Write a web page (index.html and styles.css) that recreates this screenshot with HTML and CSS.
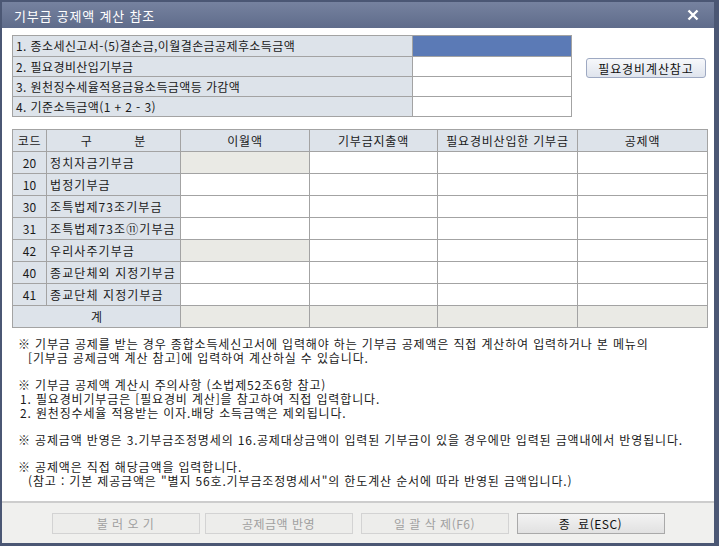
FILE: index.html
```html
<!DOCTYPE html>
<html lang="ko">
<head>
<meta charset="UTF-8">
<title>기부금 공제액 계산 참조</title>
<link rel="stylesheet" href="styles.css">
</head>
<body>
<div class="window">
    <div class="titlebar">
        <span class="title">기부금 공제액 계산 참조</span>
        <svg class="close" width="12" height="12" viewBox="0 0 12 12">
            <path d="M1.5 1.5 L10.5 10.5 M10.5 1.5 L1.5 10.5" stroke="#fff" stroke-width="2.4" fill="none"/>
        </svg>
    </div>

    <div class="content">
        <div class="top">
            <table class="base">
                <tr><td class="lbl">1. 종소세신고서-(5)결손금,이월결손금공제후소득금액</td><td class="val active"></td></tr>
                <tr><td class="lbl">2. 필요경비산입기부금</td><td class="val"></td></tr>
                <tr><td class="lbl">3. 원천징수세율적용금융소득금액등 가감액</td><td class="val"></td></tr>
                <tr><td class="lbl">4. 기준소득금액(1 + 2 - 3)</td><td class="val"></td></tr>
            </table>
            <button class="ref-btn">필요경비계산참고</button>
        </div>

        <table class="grid">
            <colgroup>
                <col class="c-code"><col class="c-name"><col class="c-amt"><col class="c-amt2"><col class="c-exp"><col class="c-ded">
            </colgroup>
            <tr class="head">
                <td>코드</td><td>구&nbsp;&nbsp;&nbsp;&nbsp;&nbsp;&nbsp;&nbsp;&nbsp;&nbsp;&nbsp;분</td><td>이월액</td><td>기부금지출액</td><td>필요경비산입한 기부금</td><td>공제액</td>
            </tr>
            <tr><td class="code">20</td><td class="name">정치자금기부금</td><td class="off"></td><td></td><td></td><td></td></tr>
            <tr><td class="code">10</td><td class="name">법정기부금</td><td></td><td></td><td></td><td></td></tr>
            <tr><td class="code">30</td><td class="name">조특법제73조기부금</td><td></td><td></td><td></td><td></td></tr>
            <tr><td class="code">31</td><td class="name">조특법제73조⑪기부금</td><td></td><td></td><td></td><td></td></tr>
            <tr><td class="code">42</td><td class="name">우리사주기부금</td><td class="off"></td><td></td><td></td><td></td></tr>
            <tr><td class="code">40</td><td class="name">종교단체외 지정기부금</td><td></td><td></td><td></td><td></td></tr>
            <tr><td class="code">41</td><td class="name">종교단체 지정기부금</td><td></td><td></td><td></td><td></td></tr>
            <tr class="sum"><td colspan="2" class="code">계</td><td class="off"></td><td class="off"></td><td class="off"></td><td class="off"></td></tr>
        </table>

        <div class="notes">
            <p>※ 기부금 공제를 받는 경우 종합소득세신고서에 입력해야 하는 기부금 공제액은 직접 계산하여 입력하거나 본 메뉴의</p>
            <p class="ind2">[기부금 공제금액 계산 참고]에 입력하여 계산하실 수 있습니다.</p>
            <p class="gap">※ 기부금 공제액 계산시 주의사항 (소법제52조6항 참고)</p>
            <p class="ind1">1. 필요경비기부금은 [필요경비 계산]을 참고하여 직접 입력합니다.</p>
            <p class="ind1">2. 원천징수세율 적용받는 이자.배당 소득금액은 제외됩니다.</p>
            <p class="gap">※ 공제금액 반영은 3.기부금조정명세의 16.공제대상금액이 입력된 기부금이 있을 경우에만 입력된 금액내에서 반영됩니다.</p>
            <p class="gap">※ 공제액은 직접 해당금액을 입력합니다.</p>
            <p class="ind2">(참고 : 기본 제공금액은 "별지 56호.기부금조정명세서"의 한도계산 순서에 따라 반영된 금액입니다.)</p>
        </div>
    </div>

    <div class="footer">
        <button class="fbtn" disabled>불 러 오 기</button>
        <button class="fbtn" disabled>공제금액 반영</button>
        <button class="fbtn wide" disabled>일 괄 삭 제(F6)</button>
        <button class="fbtn wide on">종&nbsp;&nbsp;료(ESC)</button>
    </div>
</div>
</body>
</html>
```

FILE: styles.css
```css
* {
    box-sizing: border-box;
}
body {
    margin: 0;
    font-family: "Noto Sans CJK KR", "Noto Sans", sans-serif;
    font-size: 12px;
    color: #1a1a1a;
}
.window {
    width: 719px;
    height: 546px;
    background-color: #4b5774;
    padding: 2px 5px 3px 2px;
    display: flex;
    flex-direction: column;
}
.titlebar {
    height: 26px;
    background: linear-gradient(#76829f, #5f6c8b);
    display: flex;
    align-items: center;
    justify-content: space-between;
    padding: 0 15px 0 12px;
}
.title {
    color: #ffffff;
    font-size: 13px;
    letter-spacing: 0.8px;
}
.content {
    background-color: #ffffff;
    flex: 1;
    padding: 7px 0 0 10px;
}
.top {
    display: flex;
    align-items: flex-start;
}
table {
    border-collapse: collapse;
}
td {
    border: 1px solid #a3a3a3;
    padding: 0;
    line-height: 14px;
}
.base td {
    height: 20px;
}
.base tr:first-child td {
    height: 21px;
}
.lbl {
    width: 400px;
    background-color: #dde3ea;
    padding-left: 3px;
    letter-spacing: 0.4px;
}
.val {
    width: 159px;
}
.val.active {
    background-color: #5b7ab6;
}
.ref-btn {
    margin: 23px 0 0 14px;
    width: 120px;
    height: 20px;
    padding: 0;
    font-family: inherit;
    font-size: 12px;
    letter-spacing: 0.9px;
    color: #111;
    border: 1px solid #9ea9c2;
    border-radius: 3px;
    background: linear-gradient(#f7f8fb, #dfe4ed);
}
.grid {
    margin-top: 12px;
    width: 695px;
    table-layout: fixed;
}
.c-code { width: 34px; }
.c-name { width: 134px; }
.c-amt { width: 129px; }
.c-amt2 { width: 128px; }
.c-exp { width: 140px; }
.c-ded { width: 130px; }
.grid td {
    height: 22px;
}
.head td {
    background-color: #dde3ea;
    text-align: center;
    letter-spacing: 0.8px;
}
.code {
    background-color: #dde3ea;
    text-align: center;
}
.name {
    background-color: #dde3ea;
    padding-left: 3px;
    letter-spacing: 1.1px;
    white-space: nowrap;
    overflow: hidden;
}
.off {
    background-color: #eaeae5;
}
.notes {
    margin-top: 9px;
    padding-left: 6px;
    letter-spacing: 0.85px;
}
.notes p {
    margin: 0;
    line-height: 14px;
    white-space: nowrap;
}
.notes .gap {
    margin-top: 13px;
}
.notes .ind1 {
    padding-left: 2px;
}
.notes .ind2 {
    padding-left: 10px;
}
.footer {
    height: 42px;
    border-top: 2px solid #cdcdcd;
    background-color: #f0f0ee;
    display: flex;
    justify-content: center;
    align-items: flex-start;
    padding-top: 10px;
    gap: 5px;
}
.fbtn {
    width: 148px;
    height: 21px;
    padding: 0;
    font-family: inherit;
    font-size: 12px;
    letter-spacing: 0.5px;
    color: #a0a0a0;
    border: 1px solid #d3d3d3;
    background-color: #ededeb;
}
.fbtn.wide {
    margin-left: 3px;
}
.fbtn.on {
    color: #111;
    border: 1px solid #a9a9a9;
    background: linear-gradient(#f3f3f3, #e1e1e1);
}
```
